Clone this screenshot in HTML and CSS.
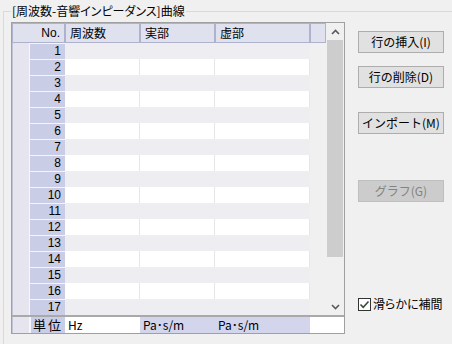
FILE: index.html
```html
<!DOCTYPE html>
<html lang="ja">
<head>
  <meta charset="UTF-8">
  <title>周波数-音響インピーダンス曲線</title>
  <link rel="stylesheet" href="styles.css">
</head>
<body>
  <fieldset class="grupo">
    <legend>[周波数-音響インピーダンス]曲線</legend>
    <div class="conteudo">
      <div class="grade">
        <div class="corpo">
          <div class="planilha">
            <div class="cabecalho">
              <div class="cab cab-no">No.</div>
              <div class="cab">周波数</div>
              <div class="cab">実部</div>
              <div class="cab">虚部</div>
              <div class="cab"></div>
            </div>
            <div class="linha impar"><div class="faixa"></div><div class="num">1</div><div class="cel"></div><div class="cel"></div><div class="cel"></div><div class="vazio"></div></div>
            <div class="linha"><div class="faixa"></div><div class="num">2</div><div class="cel"></div><div class="cel"></div><div class="cel"></div><div class="vazio"></div></div>
            <div class="linha impar"><div class="faixa"></div><div class="num">3</div><div class="cel"></div><div class="cel"></div><div class="cel"></div><div class="vazio"></div></div>
            <div class="linha"><div class="faixa"></div><div class="num">4</div><div class="cel"></div><div class="cel"></div><div class="cel"></div><div class="vazio"></div></div>
            <div class="linha impar"><div class="faixa"></div><div class="num">5</div><div class="cel"></div><div class="cel"></div><div class="cel"></div><div class="vazio"></div></div>
            <div class="linha"><div class="faixa"></div><div class="num">6</div><div class="cel"></div><div class="cel"></div><div class="cel"></div><div class="vazio"></div></div>
            <div class="linha impar"><div class="faixa"></div><div class="num">7</div><div class="cel"></div><div class="cel"></div><div class="cel"></div><div class="vazio"></div></div>
            <div class="linha"><div class="faixa"></div><div class="num">8</div><div class="cel"></div><div class="cel"></div><div class="cel"></div><div class="vazio"></div></div>
            <div class="linha impar"><div class="faixa"></div><div class="num">9</div><div class="cel"></div><div class="cel"></div><div class="cel"></div><div class="vazio"></div></div>
            <div class="linha"><div class="faixa"></div><div class="num">10</div><div class="cel"></div><div class="cel"></div><div class="cel"></div><div class="vazio"></div></div>
            <div class="linha impar"><div class="faixa"></div><div class="num">11</div><div class="cel"></div><div class="cel"></div><div class="cel"></div><div class="vazio"></div></div>
            <div class="linha"><div class="faixa"></div><div class="num">12</div><div class="cel"></div><div class="cel"></div><div class="cel"></div><div class="vazio"></div></div>
            <div class="linha impar"><div class="faixa"></div><div class="num">13</div><div class="cel"></div><div class="cel"></div><div class="cel"></div><div class="vazio"></div></div>
            <div class="linha"><div class="faixa"></div><div class="num">14</div><div class="cel"></div><div class="cel"></div><div class="cel"></div><div class="vazio"></div></div>
            <div class="linha impar"><div class="faixa"></div><div class="num">15</div><div class="cel"></div><div class="cel"></div><div class="cel"></div><div class="vazio"></div></div>
            <div class="linha"><div class="faixa"></div><div class="num">16</div><div class="cel"></div><div class="cel"></div><div class="cel"></div><div class="vazio"></div></div>
            <div class="linha impar"><div class="faixa"></div><div class="num">17</div><div class="cel"></div><div class="cel"></div><div class="cel"></div><div class="vazio"></div></div>
          </div>
          <div class="rolagem">
            <div class="seta">
              <svg width="9" height="6" viewBox="0 0 9 6"><polyline points="1,5 4.5,1.5 8,5" fill="none" stroke="#5a5a5a" stroke-width="1.6"/></svg>
            </div>
            <div class="polegar"></div>
            <div class="trilho"></div>
            <div class="seta">
              <svg width="9" height="6" viewBox="0 0 9 6"><polyline points="1,1 4.5,4.5 8,1" fill="none" stroke="#5a5a5a" stroke-width="1.6"/></svg>
            </div>
          </div>
        </div>
        <div class="rodape">
          <div class="faixa"></div>
          <div class="unid">単位</div>
          <div class="ucel branco">Hz</div>
          <div class="ucel">Pa･s/m</div>
          <div class="ucel">Pa･s/m</div>
          <div class="ucel branco"></div>
        </div>
      </div>

      <div class="botoes">
        <button class="botao b-inserir">行の挿入(I)</button>
        <button class="botao b-excluir">行の削除(D)</button>
        <button class="botao b-importar">インポート(M)</button>
        <button class="botao b-grafico" disabled>グラフ(G)</button>
        <label class="suave">
          <span class="caixa">
            <svg width="11" height="11" viewBox="0 0 11 11"><polyline points="1.5,5.5 4.2,8.3 9.5,2.5" fill="none" stroke="#3c4a3c" stroke-width="1.6"/></svg>
          </span>
          滑らかに補間
        </label>
      </div>
    </div>
  </fieldset>
</body>
</html>
```

FILE: styles.css
```css
html, body {
    margin: 0;
    overflow: hidden;
}
body {
    background: #f0f0f0;
    font-family: "Noto Sans CJK JP", "Liberation Sans", sans-serif;
    font-size: 12px;
    color: #000;
    width: 452px;
    height: 344px;
}
/* a moldura do grupo passa da borda da janela: sem lados direito e inferior */
.grupo {
    margin: 4px 0 0 3px;
    padding: 4px 0 0 7px;
    border: 1px solid #d9d9d9;
    border-right: none;
    border-bottom: none;
    width: 449px;
    height: 340px;
    box-sizing: border-box;
}
.grupo legend {
    padding: 0 1px;
    line-height: 14px;
    font-size: 12px;
    font-feature-settings: "palt";
}
.conteudo {
    display: flex;
}
.grade {
    border: 1px solid #a0a0a0;
    width: 332px;
    background: #f0f0f0;
}
.corpo {
    display: flex;
    height: 292px;
}
.planilha {
    width: 314px;
}
.cabecalho, .linha {
    display: grid;
    grid-template-columns: 18px 35px 75px 75px 95px 16px;
}
.cabecalho {
    height: 20px;
}
.cab {
    box-sizing: border-box;
    border: 1px solid #aeb2cc;
    background: #dfe1ef;
    line-height: 18px;
    padding-left: 4px;
}
.cab-no {
    grid-column: span 2;
    text-align: right;
    padding-right: 4px;
    font-family: "Liberation Sans", sans-serif;
}
.linha {
    height: 16px;
    line-height: 16px;
}
.faixa {
    background: #e6e5ef;
    border-left: 1px solid #c2c3d4;
    border-right: 1px solid #f6f6fb;
}
.num {
    background: #c9cde6;
    border-top: 1px solid #f4f5fb;
    text-align: right;
    padding-right: 4px;
    line-height: 15px;
    font-family: "Liberation Sans", sans-serif;
}
.cel {
    background: #fff;
    border-right: 1px solid #e6e6e6;
}
.impar .cel {
    background: #eeedf2;
    border-right-color: #eeedf2;
}
.vazio {
    background: #f0f0f0;
}
.rolagem {
    width: 16px;
    margin-left: 1px;
    display: flex;
    flex-direction: column;
    background: #f0f0f0;
}
.seta {
    height: 17px;
    display: flex;
    align-items: center;
    justify-content: center;
}
.polegar {
    height: 217px;
    background: #cdcdcd;
}
.trilho {
    flex: 1;
}
.rodape {
    display: grid;
    grid-template-columns: 18px 35px 75px 75px 95px 34px;
    height: 16px;
    border-top: 2px solid #a9a9a9;
    line-height: 16px;
}
.unid {
    background: #c9cde6;
    font-size: 13px;
    letter-spacing: 2px;
    padding-left: 2px;
    border-left: 1px solid #f4f5fb;
}
.ucel {
    background: #d2d5ec;
    padding-left: 3px;
}
.ucel.branco {
    background: #fff;
}
.botoes {
    width: 86px;
    margin-left: 13px;
    display: flex;
    flex-direction: column;
    padding-top: 9px;
    height: 290px;
    box-sizing: border-box;
}
.botao {
    height: 22px;
    border: 1px solid #adadad;
    background: #e1e1e1;
    font-family: "Noto Sans CJK JP", sans-serif;
    font-size: 12px;
    color: #000;
    padding: 0;
    line-height: 20px;
}
.b-excluir { margin-top: 13px; }
.b-importar { margin-top: 24px; }
.b-grafico {
    margin-top: 46px;
    background: #cccccc;
    border-color: #bfbfbf;
    color: #838383;
}
.suave {
    margin-top: auto;
    display: flex;
    align-items: center;
    gap: 2px;
    line-height: 16px;
    font-feature-settings: "palt";
}
.caixa {
    width: 11px;
    height: 11px;
    border: 1px solid #333;
    background: #fff;
    display: flex;
}
```
